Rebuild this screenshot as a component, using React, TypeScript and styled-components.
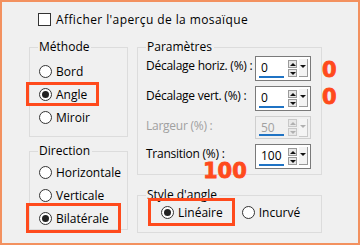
import React from 'react';
import styled, { createGlobalStyle, css } from 'styled-components';

const GlobalStyle = createGlobalStyle`
  html, body {
    margin: 0;
    padding: 0;
    background: #f0f0f0;
  }
  * {
    box-sizing: border-box;
  }
`

const ACCENT = '#ff4a1c';

const Frame = styled.div`
  position: relative;
  width: 360px;
  height: 245px;
  border: 2px solid #f3915f;
  background: #f0f0f0;
  font-family: "Open Sans", "Noto Sans", sans-serif;
  font-size: 12px;
  color: #000;
  padding: 10px 0 0 27px;
`

const CheckRow = styled.label`
  display: flex;
  align-items: center;
  gap: 5px;
  margin-left: 9px;
  height: 15px;
  letter-spacing: 0.4px;
`

const CheckBox = styled.span`
  width: 13px;
  height: 13px;
  border: 1px solid #333;
  background: #fff;
`

const Columns = styled.div`
  display: grid;
  grid-template-columns: 99px 185px;
  column-gap: 9px;
  margin-top: 13px;
`

const Column = styled.div<{ $gap: number }>`
  display: flex;
  flex-direction: column;
  gap: ${p => p.$gap}px;
`

const Group = styled.fieldset<{ $height: number }>`
  margin: 0;
  height: ${p => p.$height}px;
  border: 1px solid #dcdcdc;
  padding: 0 0 0 8px;
  display: flex;
  flex-direction: column;
  min-width: 0;
`

const Legend = styled.legend`
  padding: 0 2px 0 1px;
  margin-left: 0;
  line-height: 14px;
`

const RadioRow = styled.label<{ $highlight?: boolean; $vpad?: number }>`
  display: flex;
  align-self: flex-start;
  align-items: center;
  gap: 4px;
  height: 18px;
  padding-left: 1px;
  ${p => p.$highlight && css`
    box-sizing: content-box;
    padding: ${p.$vpad ?? 0}px 9px ${p.$vpad ?? 0}px 10px;
    margin: -${p.$vpad ?? 0}px -9px -${p.$vpad ?? 0}px -9px;
    outline: 3px solid ${ACCENT};
  `}
`

const RadioDot = styled.span<{ $checked?: boolean }>`
  width: 13px;
  height: 13px;
  border-radius: 50%;
  border: 1px solid #333;
  background: #fff;
  display: flex;
  align-items: center;
  justify-content: center;
  &::after {
    content: "";
    width: 7px;
    height: 7px;
    border-radius: 50%;
    background: ${p => (p.$checked ? '#222' : 'transparent')};
  }
`

const RadioList = styled.div<{ $top: number }>`
  display: flex;
  flex-direction: column;
  gap: 5px;
  margin-top: ${p => p.$top}px;
`

const ParamList = styled.div`
  display: flex;
  flex-direction: column;
  gap: 5px;
  margin-top: 2px;
`

const ParamRow = styled.div<{ $disabled?: boolean }>`
  display: flex;
  align-items: flex-start;
  justify-content: space-between;
  height: ${p => (p.$disabled ? 23 : 25)}px;
  padding-right: 10px;
  color: ${p => (p.$disabled ? '#a0a0a0' : '#000')};
`

const ParamLabel = styled.span`
  line-height: 16px;
  margin-top: 2px;
  letter-spacing: -0.25px;
`

const Spin = styled.div<{ $disabled?: boolean }>`
  display: flex;
  width: 56px;
  height: ${p => (p.$disabled ? 23 : 25)}px;
  border: 1px solid ${p => (p.$disabled ? '#cfcfcf' : '#7a7a7a')};
  background: ${p => (p.$disabled ? '#f0f0f0' : '#fff')};
  padding: 2px;
  gap: 2px;
`

const SpinValue = styled.div`
  position: relative;
  width: 27px;
  padding-left: 3px;
  line-height: 17px;
  &::after {
    content: "";
    position: absolute;
    left: 1px;
    right: 0;
    bottom: 0;
    height: 2px;
    background: #1f73c4;
  }
`

const Arrows = styled.div`
  display: flex;
  flex-direction: column;
  justify-content: center;
  gap: 1px;
  margin-left: 2px;
`

const ArrowBtn = styled.span<{ $down?: boolean; $disabled?: boolean }>`
  width: 9px;
  height: 8px;
  border: 1px solid ${p => (p.$disabled ? '#c8c8c8' : '#9a9a9a')};
  background: #e8e8e8;
  display: flex;
  align-items: center;
  justify-content: center;
  &::after {
    content: "";
    border-left: 3px solid transparent;
    border-right: 3px solid transparent;
    ${p => p.$down
      ? css`border-top: 3px solid ${p.$disabled ? '#b0b0b0' : '#111'};`
      : css`border-bottom: 3px solid ${p.$disabled ? '#b0b0b0' : '#111'};`}
  }
`

const DropBtn = styled.span<{ $disabled?: boolean }>`
  width: 9px;
  height: 18px;
  border-right: 1px solid ${p => (p.$disabled ? '#c8c8c8' : '#9a9a9a')};
  border-bottom: 1px solid ${p => (p.$disabled ? '#c8c8c8' : '#9a9a9a')};
  background: #f4f4f4;
  display: flex;
  justify-content: center;
  padding-top: 6px;
  &::after {
    content: "";
    height: 0;
    border-left: 3px solid transparent;
    border-right: 3px solid transparent;
    border-top: 3px solid ${p => (p.$disabled ? '#b0b0b0' : '#111')};
  }
`

const StyleRow = styled.div`
  display: flex;
  align-items: center;
  gap: 18px;
  margin-top: 1px;
  padding-left: 14px;
`

const Annotation = styled.span<{ $x: number; $y: number }>`
  position: absolute;
  left: ${p => p.$x}px;
  top: ${p => p.$y}px;
  font-family: "DejaVu Sans", "Liberation Sans", sans-serif;
  font-weight: 700;
  font-size: 21px;
  line-height: 21px;
  color: ${ACCENT};
  -webkit-text-stroke: 0.8px ${ACCENT};
`

interface RadioProps {
  label: string
  checked?: boolean
  highlight?: boolean
  vpad?: number
}

const Radio = ({ label, checked, highlight, vpad }: RadioProps) => (
  <RadioRow $highlight={highlight} $vpad={vpad}>
    <RadioDot $checked={checked} />
    <span>{label}</span>
  </RadioRow>
)

interface SpinFieldProps {
  label: string
  value: string
  disabled?: boolean
}

const SpinField = ({ label, value, disabled }: SpinFieldProps) => (
  <ParamRow $disabled={disabled}>
    <ParamLabel>{label}</ParamLabel>
    <Spin $disabled={disabled}>
      <SpinValue>{value}</SpinValue>
      <Arrows>
        <ArrowBtn $disabled={disabled} />
        <ArrowBtn $down $disabled={disabled} />
      </Arrows>
      <DropBtn $disabled={disabled} />
    </Spin>
  </ParamRow>
)

export default function App() {
  return (
    <>
      <GlobalStyle />
      <Frame>
        <CheckRow>
          <CheckBox />
          <span>Afficher l'aperçu de la mosaïque</span>
        </CheckRow>
        <Columns>
          <Column $gap={7}>
            <Group $height={97}>
              <Legend>Méthode</Legend>
              <RadioList $top={8}>
                <Radio label="Bord" />
                <Radio label="Angle" checked highlight />
                <Radio label="Miroir" />
              </RadioList>
            </Group>
            <Group $height={86}>
              <Legend>Direction</Legend>
              <RadioList $top={5}>
                <Radio label="Horizontale" />
                <Radio label="Verticale" />
                <Radio label="Bilatérale" checked highlight vpad={3} />
              </RadioList>
            </Group>
          </Column>
          <Column $gap={13}>
            <Group $height={135}>
              <Legend>Paramètres</Legend>
              <ParamList>
                <SpinField label="Décalage horiz. (%) :" value="0" />
                <SpinField label="Décalage vert. (%) :" value="0" />
                <SpinField label="Largeur (%) :" value="50" disabled />
                <SpinField label="Transition (%) :" value="100" />
              </ParamList>
            </Group>
            <Group $height={45}>
              <Legend>Style d'angle</Legend>
              <StyleRow>
                <Radio label="Linéaire" checked highlight vpad={2} />
                <Radio label="Incurvé" />
              </StyleRow>
            </Group>
          </Column>
        </Columns>
        <Annotation $x={320} $y={58}>0</Annotation>
        <Annotation $x={320} $y={85}>0</Annotation>
        <Annotation $x={201} $y={159}>100</Annotation>
      </Frame>
    </>
  );
}
